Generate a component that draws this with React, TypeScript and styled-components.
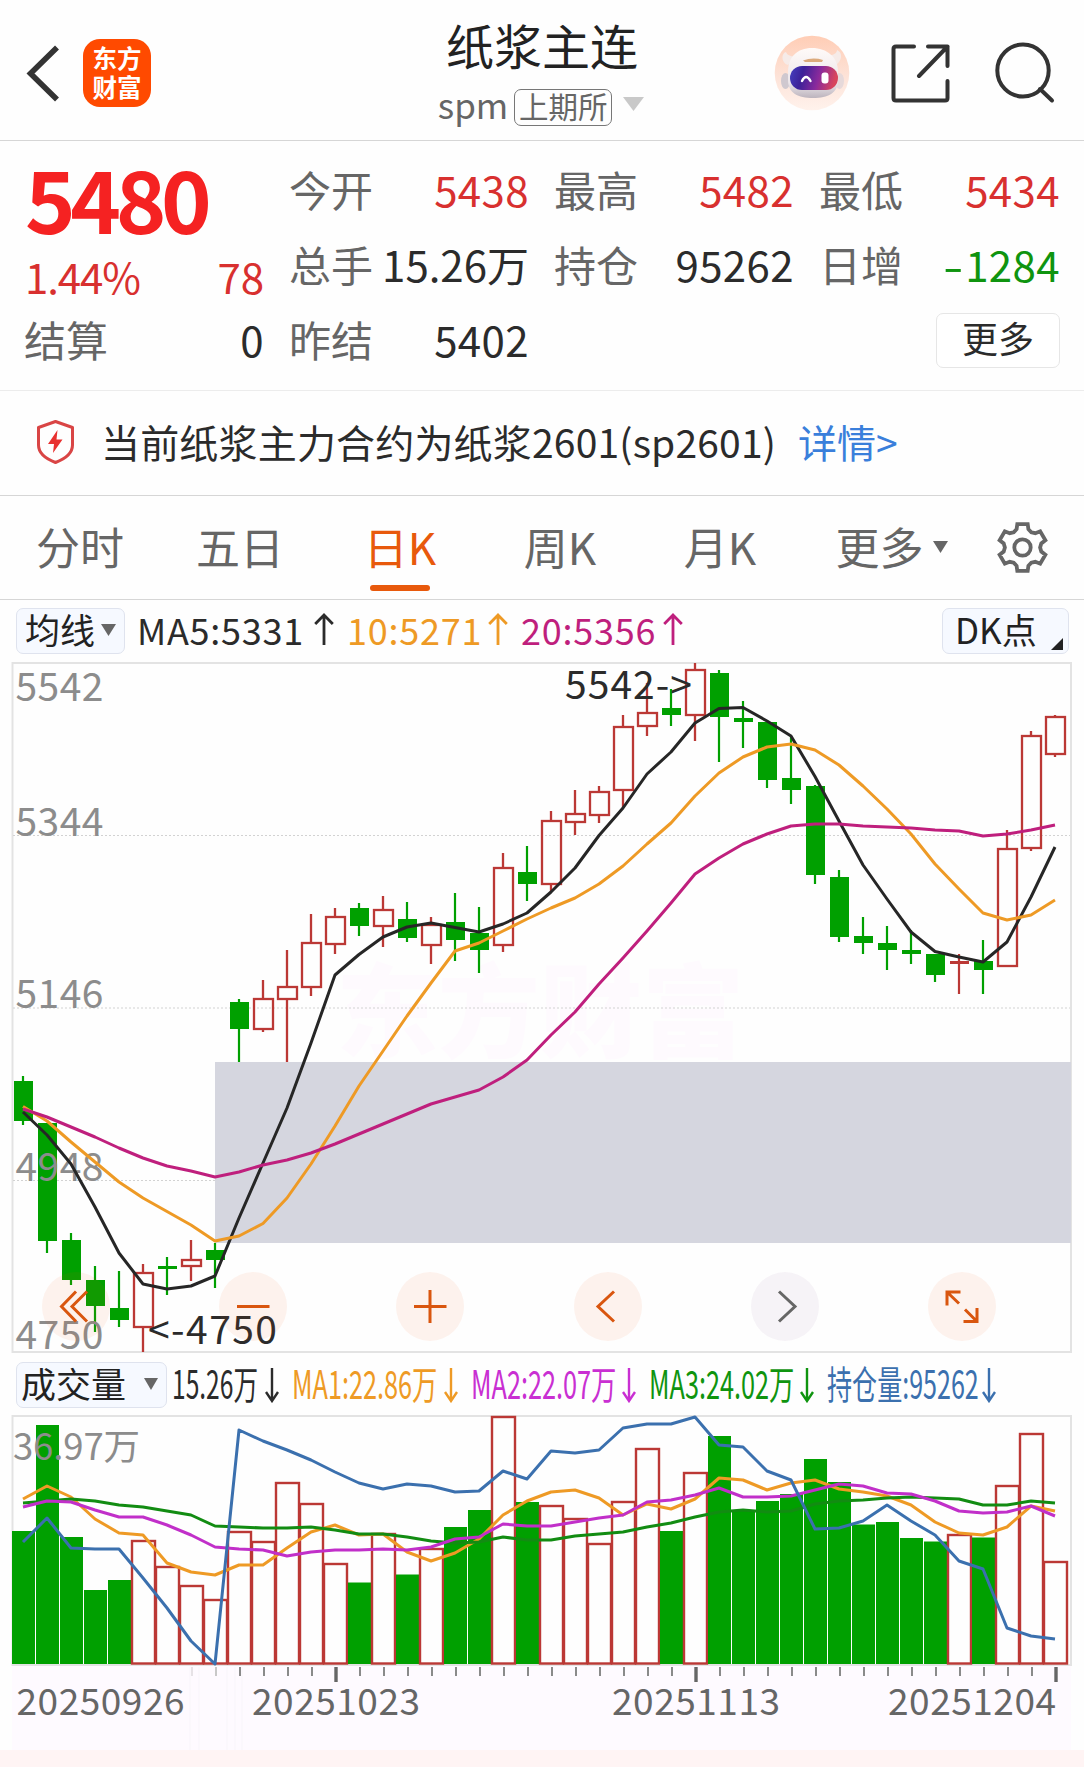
import React from 'react';
import styled, { createGlobalStyle } from 'styled-components';

const Global = createGlobalStyle`
  * { box-sizing: border-box; }
  body {
    margin: 0;
    background: #fefefe;
    color: #2b2b2b;
    font-family: "Noto Sans CJK SC", "Noto Sans", sans-serif;
  }
`;

const FONT = '"Noto Sans CJK SC", "Noto Sans", sans-serif';
const RED = '#d8302f';
const GREEN = '#0f940f';
const INK = '#2b2b2b';
const GREY = '#666';
const ORANGE = '#e8590c';

const Page = styled.main`
  width: 1084px;
  height: 1767px;
  display: flex;
  flex-direction: column;
  overflow: hidden;
  white-space: nowrap;
`;

/* ---------- header ---------- */

const Header = styled.header`
  height: 141px;
  flex: none;
  border-bottom: 1px solid #d6d6d6;
  display: grid;
  grid-template-columns: 1fr auto 1fr;
`;

const HeaderLeft = styled.div`
  display: flex;
  align-items: center;
  height: 68px;
  margin-top: 39px;
  padding-left: 24px;
  gap: 22px;
`;

const Logo = styled.div`
  width: 68px;
  height: 68px;
  border-radius: 17px;
  background: #ff4a00;
  color: #fff;
  font-size: 24.5px;
  font-weight: 700;
  line-height: 29px;
  text-align: center;
  padding-top: 4px;
`;

const TitleBlock = styled.div`
  display: flex;
  flex-direction: column;
  align-items: center;
  padding-top: 14px;
`;

const Title = styled.h1`
  margin: 0;
  font-size: 48px;
  font-weight: 400;
  line-height: 60px;
  height: 70px;
  color: #222;
`;

const SubTitle = styled.div`
  display: flex;
  align-items: center;
  font-size: 35px;
  line-height: 40px;
  height: 46px;
  color: ${GREY};
  padding-bottom: 6px;
  margin-right: 2px;
`;

const Exchange = styled.span`
  margin: 6px 11px 0 6px;
  width: 98px;
  height: 37px;
  border: 1.5px solid #777;
  border-radius: 7px;
  font-size: 29.5px;
  line-height: 31px;
  text-align: center;
`;

const HeaderRight = styled.div`
  display: flex;
  justify-content: flex-end;
  align-items: center;
  height: 76px;
  margin-top: 35px;
  padding-right: 28px;
  gap: 40px;
`;

const ShareSlot = styled.span`
  display: flex;
  margin-right: 4px;
`;

/* ---------- quote ---------- */

const Quote = styled.section`
  height: 250px;
  flex: none;
  border-bottom: 1px solid #ececec;
  padding: 10px 24px 0 25px;
  display: grid;
  grid-template-columns: 239px 239px 239px 240px;
  column-gap: 26px;
  font-size: 42px;
`;

const QuoteColumn = styled.div`
  display: flex;
  flex-direction: column;
`;

const Price = styled.div`
  height: 93px;
  line-height: 91px;
  font-size: 86px;
  font-weight: 700;
  letter-spacing: -5.4px;
  color: #f52222;
`;

const Row = styled.div<{ $h: number; $color?: string }>`
  display: flex;
  justify-content: space-between;
  height: ${p => p.$h}px;
  line-height: ${p => p.$h}px;
  color: ${p => p.$color || INK};
`;

const Percent = styled.span`
  letter-spacing: -1.1px;
`;

const Name = styled.span`
  color: ${GREY};
  margin-left: -1px;
`;

const Value = styled.span<{ $color?: string }>`
  color: ${p => p.$color || INK};
  letter-spacing: 0.4px;
`;

const Minus = styled.span`
  display: inline-block;
  width: 22px;
  transform: scaleX(1.4);
  transform-origin: left center;
`;

const MoreButton = styled.button`
  align-self: flex-end;
  margin-top: 12px;
  width: 124px;
  height: 55px;
  border: 1.5px solid #e6e6e6;
  border-radius: 7px;
  background: #fff;
  font: 400 36px/45px ${FONT};
  color: ${INK};
  padding: 0 0 7px;
`;

/* ---------- notice ---------- */

const Notice = styled.section`
  height: 105px;
  flex: none;
  border-bottom: 1px solid #d6d6d6;
  display: flex;
  align-items: center;
  padding: 0 0 3px 35px;
  font-size: 39px;
  line-height: 99px;
`;

const NoticeText = styled.span`
  margin-left: 25px;
  width: 697px;
  letter-spacing: 0.18px;
`;

const Link = styled.a`
  color: #3a7fdb;
`;

/* ---------- tabs ---------- */

const Tabs = styled.nav`
  height: 104px;
  flex: none;
  border-bottom: 1px solid #d6d6d6;
  display: flex;
`;

const Tab = styled.div<{ $active?: boolean; $w?: number }>`
  width: ${p => p.$w || 160}px;
  display: flex;
  flex-direction: column;
  align-items: center;
  font-size: 44px;
  line-height: 89px;
  height: 103px;
  padding-top: 6px;
  color: ${p => (p.$active ? ORANGE : GREY)};
`;

const Underline = styled.i`
  width: 60px;
  height: 6px;
  border-radius: 3px;
  margin-top: -6px;
  background: ${ORANGE};
`;

const TabLine = styled.span`
  display: flex;
  align-items: center;
  gap: 9px;
`;

const GearSlot = styled.div`
  display: flex;
  align-items: center;
  padding: 0 0 1px 13px;
`;

/* ---------- indicator rows ---------- */

const IndicatorBar = styled.div<{ $h: number }>`
  height: ${p => p.$h}px;
  flex: none;
  display: flex;
  align-items: flex-start;
  padding: 8px 15px 0 16px;
`;

const Picker = styled.button<{ $w: number; $gap?: number }>`
  flex: none;
  width: ${p => p.$w}px;
  height: 46px;
  border: 1.5px solid #dfe3ee;
  border-radius: 7px;
  background: #f6f9ff;
  padding: 0 8px 5px ${p => (p.$w > 130 ? 4 : 8)}px;
  margin-right: ${p => p.$gap || 0}px;
  display: flex;
  align-items: center;
  justify-content: space-between;
  font: 400 35px/38px ${FONT};
  color: #222;
  svg { margin-top: 3px; }
`;

const DkButton = styled(Picker)`
  margin-left: auto;
  padding: 0 5px 3px 12px;
  align-items: flex-end;
  line-height: 43px;
`;

const Average = styled.span<{ $color: string; $w: number }>`
  color: ${p => p.$color};
  width: ${p => p.$w}px;
  display: flex;
  align-items: center;
  justify-content: space-between;
  margin-right: 13px;
  font-size: 36px;
  letter-spacing: 0.75px;
  line-height: 38px;
  height: 43px;
  padding-bottom: 1px;
`;

const VolumeItem = styled.span<{ $color: string; $w: number }>`
  color: ${p => p.$color};
  width: ${p => p.$w}px;
  display: flex;
  align-items: center;
  justify-content: space-between;
  margin-right: 13px;
  height: 45px;
`;

const Condensed = styled.span<{ $scale?: number }>`
  width: 0;
  font-size: 39px;
  line-height: 43px;
  margin-top: -5px;
  transform: scaleX(${p => p.$scale || 0.648});
  transform-origin: left center;
`;

const ChartBox = styled.div<{ $h: number }>`
  position: relative;
  height: ${p => p.$h}px;
  flex: none;
  svg { display: block; overflow: visible; }
`;

const ControlStrip = styled.div`
  position: absolute;
  left: 42px;
  top: 610px;
  display: flex;
  gap: 109.2px;
`;

const RoundButton = styled.button<{ $muted?: boolean }>`
  width: 68px;
  height: 69px;
  border: 0;
  padding: 0;
  border-radius: 50%;
  background: ${p => (p.$muted ? 'rgba(90, 30, 120, .05)' : 'rgba(245, 85, 20, .072)')};
  color: ${p => (p.$muted ? '#666' : '#d9560f')};
`;

const Footer = styled.div`
  flex: 1;
  background: #fff4f4;
`;

/* ---------- chart data: vertical pixel positions on the page ---------- */

const X = (i: number) => 23 + 24 * i;

type Candle = [up: number, high: number, top: number, bottom: number, low: number];
const CANDLES: Candle[] = [
  [0, 1076, 1081, 1121, 1125], [0, 1123, 1123, 1241, 1253], [0, 1233, 1240, 1280, 1285],
  [0, 1266, 1280, 1306, 1332], [0, 1271, 1308, 1320, 1327], [1, 1264, 1272, 1328, 1352],
  [0, 1257, 1266, 1269, 1295], [1, 1240, 1259, 1267, 1281], [0, 1243, 1250, 1260, 1288],
  [0, 999, 1002, 1029, 1062], [1, 980, 998, 1030, 1032], [1, 950, 986, 1000, 1062],
  [1, 914, 942, 988, 996], [1, 908, 916, 945, 954], [0, 903, 908, 926, 936],
  [1, 896, 909, 927, 947], [0, 902, 919, 938, 942], [1, 917, 924, 946, 964],
  [0, 893, 922, 940, 961], [0, 907, 933, 950, 973], [1, 853, 867, 946, 952],
  [0, 846, 872, 884, 901], [1, 811, 820, 885, 892], [1, 790, 813, 823, 835],
  [1, 786, 791, 816, 823], [1, 715, 726, 791, 807], [1, 683, 712, 727, 736],
  [0, 689, 708, 715, 726], [1, 663, 669, 716, 741], [0, 670, 673, 717, 762],
  [0, 701, 718, 722, 748], [0, 722, 722, 780, 788], [0, 737, 778, 790, 804],
  [0, 785, 786, 875, 884], [0, 870, 877, 937, 942], [0, 917, 936, 943, 954],
  [0, 926, 943, 950, 970], [0, 930, 950, 954, 964], [0, 954, 954, 975, 982],
  [1, 954, 961, 964, 994], [0, 940, 961, 970, 994], [1, 830, 848, 967, 967],
  [1, 731, 735, 849, 851], [1, 715, 716, 755, 757],
];

const MA5 = [1112, 1135, 1164, 1207, 1253, 1284, 1289, 1286, 1276, 1218, 1163, 1108, 1043, 975, 954.5, 937, 927, 923, 927.5, 932, 924, 913, 892, 868, 835.5, 808, 774, 752, 723, 708.5, 707.5, 721, 736, 776.5, 821, 865, 899, 932, 951.5, 957, 962, 942, 897, 847];
const MA10 = [1106.5, 1121, 1142, 1162, 1182, 1198, 1211.5, 1225, 1241, 1236, 1223.5, 1198, 1164, 1126, 1086, 1051, 1016, 983, 951, 943, 931, 919, 908, 898, 884, 866, 844, 823, 796, 773, 757, 747, 744, 750, 765, 786, 809, 834, 864, 889, 913, 920, 915, 900];
const MA20 = [1109, 1117, 1127, 1137, 1148, 1158, 1166, 1171, 1177, 1172, 1165, 1160, 1153, 1144, 1134, 1124, 1114, 1104, 1097, 1090, 1077, 1060, 1035, 1012, 984, 958, 931, 903, 874, 858, 844, 834, 826, 824, 824, 826, 827, 828, 830, 831, 836, 834, 830, 825];

type Bar = [up: number, top: number];
const VOLUMES: Bar[] = [
  [0, 1531], [0, 1425], [0, 1537], [0, 1590], [0, 1580], [1, 1541], [1, 1567], [1, 1586], [1, 1600],
  [1, 1532], [1, 1542], [1, 1483], [1, 1504], [1, 1564], [0, 1582.5], [1, 1534], [0, 1574.5], [1, 1549],
  [0, 1527], [0, 1510], [1, 1417], [0, 1502], [1, 1506], [1, 1519], [1, 1544], [1, 1502], [1, 1449],
  [0, 1531], [1, 1473], [0, 1436], [0, 1511], [0, 1501], [0, 1494], [0, 1459], [0, 1482], [0, 1524.5],
  [0, 1522], [0, 1538], [0, 1541.5], [1, 1535], [0, 1537.5], [1, 1486], [1, 1434], [1, 1562],
];
const VMA1 = [1499, 1486, 1497, 1519, 1533, 1535, 1563, 1572, 1575, 1565, 1565, 1548, 1532, 1525, 1535, 1534, 1552, 1561, 1553, 1539, 1515, 1501, 1492, 1490, 1498, 1515, 1504, 1509, 1499, 1478, 1480, 1490, 1483, 1480, 1489, 1492, 1496, 1505, 1522, 1533, 1535, 1527, 1506, 1511];
const VMA2 = [1507, 1501, 1502, 1510, 1517, 1517, 1525, 1535, 1547, 1549, 1550, 1556, 1552, 1550, 1550, 1549, 1550, 1547, 1539, 1537, 1524, 1526, 1526, 1522, 1518, 1515, 1502, 1500, 1495, 1488, 1497, 1497, 1496, 1490, 1484, 1486, 1493, 1494, 1501, 1511, 1513, 1512, 1506, 1516];
const VMA3 = [1503, 1501, 1499, 1501, 1505, 1507, 1511, 1515, 1526, 1527, 1528, 1528, 1527, 1530, 1534, 1534, 1537, 1541, 1543, 1542, 1537, 1540, 1540, 1536, 1534, 1532, 1527, 1523, 1517, 1512, 1510, 1512, 1511, 1504, 1501, 1500, 1498, 1497, 1498, 1499, 1505, 1505, 1501, 1503];
const INTEREST = [1542, 1518, 1548, 1549, 1549, 1578, 1608, 1641, 1664, 1430, 1441, 1450, 1460, 1472, 1483, 1489, 1484, 1486, 1492, 1491, 1471, 1479, 1451, 1453, 1450, 1428, 1424, 1424, 1417, 1445, 1447, 1471, 1480, 1529, 1528, 1521, 1505, 1521, 1535, 1561, 1569, 1628, 1636, 1639];

const Line = ({ data, color }: { data: number[]; color: string }) => (
  <polyline
    points={data.map((y, i) => `${X(i)},${y}`).join(' ')}
    fill="none"
    stroke={color}
    strokeWidth={3}
    strokeLinejoin="round"
  />
);

const Caret = ({ w, h, color }: { w: number; h: number; color: string }) => (
  <svg width={w} height={h} viewBox={`0 0 ${w} ${h}`}>
    <path d={`M0 0H${w}L${w / 2} ${h}Z`} fill={color} />
  </svg>
);

const UpArrow = () => (
  <svg width="20" height="34" viewBox="0 0 20 34" fill="none" stroke="currentColor" strokeWidth="2.8">
    <path d="M10 33V3M1.2 12L10 3L18.8 12" />
  </svg>
);

const DownArrow = () => (
  <svg width="14" height="36" viewBox="0 0 14 36" fill="none" stroke="currentColor" strokeWidth="2.4">
    <path d="M7 1V34M1 25L7 34L13 25" />
  </svg>
);

const Robot = () => (
  <svg width="76" height="76" viewBox="0 0 76 76">
    <defs>
      <linearGradient id="halo" x1="0" y1="0" x2="0" y2="1">
        <stop offset="0" stopColor="#ffcdb5" />
        <stop offset=".55" stopColor="#fde3d8" />
        <stop offset="1" stopColor="#fff2ec" />
      </linearGradient>
      <linearGradient id="visor" x1="0" y1="0" x2="1" y2=".15">
        <stop offset="0" stopColor="#4540c0" />
        <stop offset=".3" stopColor="#3d2299" />
        <stop offset=".65" stopColor="#8a2a9c" />
        <stop offset="1" stopColor="#d8455c" />
      </linearGradient>
      <linearGradient id="shell" x1="0" y1="0" x2="0" y2="1">
        <stop offset="0" stopColor="#fffaf8" />
        <stop offset=".7" stopColor="#ece6ea" />
        <stop offset="1" stopColor="#bcb4bd" />
      </linearGradient>
    </defs>
    <circle cx="38" cy="38" r="37.3" fill="url(#halo)" />
    <path d="M12 17C7 18 7 28 14 30L21 22C16 21 13 20 12 17ZM63 15C70 18 67 28 61 30L54 21C60 20 63 18 63 15Z" fill="#f6ebe8" />
    <ellipse cx="11.500" cy="46" rx="4.500" ry="8" fill="#cfc8cf" />
    <ellipse cx="65.500" cy="46" rx="4.500" ry="8" fill="#e6d9da" />
    <path d="M14 37C14 22 23 13 38 13S64 22 64 37V45C64 58 54 63 39 63S14 58 14 45Z" fill="url(#shell)" />
    <path d="M29 25.500Q39 22 49 25L48 27H31Z" fill="#dcaa7c" />
    <rect x="16" y="31" width="48" height="24" rx="12" fill="url(#visor)" />
    <path d="M28 46Q32 38 36.500 46" fill="none" stroke="#fff" strokeWidth="2.4" strokeLinecap="round" />
    <rect x="47.500" y="37.500" width="7" height="11" rx="3" fill="#fff" />
  </svg>
);

const gearPath = () => {
  const pts: string[] = [];
  const shape: [number, number][] = [[-12.500, 24], [12.500, 24], [18, 19.2], [30, 17.6], [42, 19.2]];
  for (let k = 0; k < 6; k++) {
    shape.forEach(([deg, r]) => {
      const a = ((deg + k * 60 - 90) * Math.PI) / 180;
      pts.push(`${(26.5 + r * Math.cos(a)).toFixed(1)} ${(26.5 + r * Math.sin(a)).toFixed(1)}`);
    });
  }
  return `M${pts.join('L')}Z`;
};

const Gear = () => (
  <svg width="53" height="53" viewBox="0 0 53 53" fill="none" stroke={GREY} strokeWidth="3.800">
    <path d={gearPath()} />
    <circle cx="26.500" cy="26.500" r="8.200" />
  </svg>
);

const ControlIcon = ({ d }: { d: string }) => (
  <svg width="68" height="69" viewBox="-34 -34.500 68 69" fill="none" stroke="currentColor" strokeWidth="3">
    <path d={d} />
  </svg>
);

const CONTROLS = [
  'M0 -15L-14.500 0L0 15M11 -15L-4 0L11 15',
  'M-16 0H16.500',
  'M-16 0H16.500M0 -16.500V16.500',
  'M6 -15L-10 0L6 15',
  'M-6 -15L10 0L-6 15',
  'M-1.500 -14.500H-15V-1M-15 -14.500L-3 -3M1.500 15H15V1.500M15 15L3 3',
];

const PriceChart = () => (
  <svg width="1084" height="692" viewBox="0 662 1084 692" fontFamily={FONT}>
    <text x="336" y="1050" fontSize="102" fontWeight="900" fill="#fefafe">东方财富</text>
    <rect x="12.500" y="663" width="1058.500" height="689" fill="none" stroke="#e3e3e3" strokeWidth="2" />
    {[835.5, 1008, 1180.5].map(y => (
      <path key={y} d={`M13 ${y}H1070`} stroke="#d2d2d2" strokeWidth="1" strokeDasharray="2 2" />
    ))}
    <rect x="215" y="1062" width="856" height="181" fill="#d5d6df" />
    {CANDLES.map(([up, high, top, bottom, low], i) => {
      const x = X(i);
      if (!up) {
        return (
          <g key={i} fill="#00a000">
            <rect x={x - 1.1} y={high} width="2.2" height={low - high} />
            <rect x={x - 9} y={top} width="19" height={bottom - top} />
          </g>
        );
      }
      if (bottom - top < 4) {
        return (
          <g key={i} fill="#bb3835">
            <rect x={x - 1.1} y={high} width="2.2" height={low - high} />
            <rect x={x - 9} y={top} width="19" height="3" />
          </g>
        );
      }
      return (
        <g key={i} stroke="#bb3835" strokeWidth="2.3" fill="none">
          <path d={`M${x} ${high}V${top}M${x} ${bottom}V${low}`} />
          <rect x={x - 9} y={top + 1} width="19" height={bottom - top - 2} />
        </g>
      );
    })}
    <g fontSize="39" fill="#8c8c8c">
      <text x="15.500" y="701" textLength="88">5542</text>
      <text x="15.500" y="836" textLength="88">5344</text>
      <text x="15.500" y="1008" textLength="88">5146</text>
      <text x="15.500" y="1181" textLength="88">4948</text>
      <text x="15.500" y="1348.500" textLength="88">4750</text>
    </g>
    <Line data={MA5} color="#262626" />
    <Line data={MA10} color="#ee9a25" />
    <Line data={MA20} color="#bf1f7d" />
    <g fontSize="39" fill={INK}>
      <text x="565" y="699" textLength="127">5542-&gt;</text>
      <text x="148" y="1343.500" textLength="129">&lt;-4750</text>
    </g>
  </svg>
);

const VolumeChart = () => (
  <svg width="1084" height="335" viewBox="0 1415 1084 335" fontFamily={FONT}>
    <rect x="12" y="1665" width="1059" height="85" fill="#fefaff" />
    <rect x="12.500" y="1416" width="1058.500" height="249" fill="#fefefe" stroke="#e3e3e3" strokeWidth="2" />
    {VOLUMES.map(([up, top], i) =>
      up ? (
        <rect key={i} x={X(i) - 11} y={top} width="23" height={1663.5 - top} fill="#fefefe" stroke="#bb3835" strokeWidth="2.4" />
      ) : (
        <rect key={i} x={X(i) - 11} y={top} width="23" height={1664 - top} fill="#00a000" />
      )
    )}
    <text x="13" y="1459.500" fontSize="36.500" fill="#8c8c8c" textLength="127">36.97万</text>
    <Line data={VMA1} color="#ee9a25" />
    <Line data={VMA3} color="#128c12" />
    <Line data={VMA2} color="#c12fc9" />
    <Line data={INTEREST} color="#3b70ae" />
    {VOLUMES.map((_, i) => {
      if (i < 7) return null;
      const major = i === 13 || i === 28 || i === 43;
      const color = major ? '#666' : i < 9 ? (i < 8 ? '#e6e2e6' : '#c8c8c8') : '#8a8a8a';
      return (
        <path key={i} d={`M${X(i) + 1} 1667V${major ? 1682 : 1676}`} stroke={color} strokeWidth={major ? 3.4 : 2} />
      );
    })}
    <path d="M190 1667V1750M199 1667V1750M227 1667V1750M235 1667V1750M242 1667V1750" stroke="#f8f5fa" strokeWidth="1" />
    <g fontSize="37" fill={GREY}>
      <text x="16.500" y="1715" textLength="168">20250926</text>
      <text x="252" y="1715" textLength="168">20251023</text>
      <text x="612" y="1715" textLength="168">20251113</text>
      <text x="888" y="1715" textLength="168">20251204</text>
    </g>
  </svg>
);

export default function App() {
  return (
    <Page>
      <Global />
      <Header>
        <HeaderLeft>
          <svg width="37" height="60" viewBox="0 0 37 60" fill="none" stroke="#333" strokeWidth="5.600">
            <path d="M33 4.500L6.500 30.500L33 56.500" />
          </svg>
          <Logo>
            东方
            <br />
            财富
          </Logo>
        </HeaderLeft>
        <TitleBlock>
          <Title>纸浆主连</Title>
          <SubTitle>
            spm
            <Exchange>上期所</Exchange>
            <Caret w={21} h={14} color="#c9c9c9" />
          </SubTitle>
        </TitleBlock>
        <HeaderRight>
          <Robot />
          <ShareSlot>
            <svg width="60" height="60" viewBox="0 0 60 60" fill="none" stroke="#333" strokeWidth="4" strokeLinecap="round" strokeLinejoin="round">
              <path d="M24 3.500H6Q3.500 3.500 3.500 6V55Q3.500 57.500 6 57.500H55Q57.500 57.500 57.500 55V38M38 3.500H57.500V23M57.500 3.500L29 33" />
            </svg>
          </ShareSlot>
          <svg width="62" height="62" viewBox="0 0 62 62" fill="none" stroke="#333" strokeWidth="4" strokeLinecap="round">
            <ellipse cx="29" cy="28.500" rx="25.700" ry="26" />
            <path d="M46 47L58 58.500" />
          </svg>
        </HeaderRight>
      </Header>

      <Quote>
        <QuoteColumn>
          <Price>5480</Price>
          <Row $h={63} $color={RED}>
            <Percent>1.44%</Percent>
            <span>78</span>
          </Row>
          <Row $h={63}>
            <Name>结算</Name>
            <Value>0</Value>
          </Row>
        </QuoteColumn>
        <QuoteColumn>
          <Row $h={75}><Name>今开</Name><Value $color={RED}>5438</Value></Row>
          <Row $h={75}><Name>总手</Name><Value style={{ letterSpacing: 0 }}>15.26万</Value></Row>
          <Row $h={75}><Name>昨结</Name><Value>5402</Value></Row>
        </QuoteColumn>
        <QuoteColumn>
          <Row $h={75}><Name>最高</Name><Value $color={RED}>5482</Value></Row>
          <Row $h={75}><Name>持仓</Name><Value>95262</Value></Row>
        </QuoteColumn>
        <QuoteColumn>
          <Row $h={75}><Name>最低</Name><Value $color={RED}>5434</Value></Row>
          <Row $h={75}><Name>日增</Name><Value $color={GREEN}><Minus>-</Minus>1284</Value></Row>
          <MoreButton>更多</MoreButton>
        </QuoteColumn>
      </Quote>

      <Notice>
        <svg width="41" height="46" viewBox="0 0 41 46">
          <path d="M20.500 2.500L37.500 8.500V26C37.500 34 31 39.500 20.500 43.500C10 39.500 3.500 34 3.500 26V8.500Z" fill="none" stroke="#d94545" strokeWidth="3" strokeLinejoin="round" />
          <path d="M22.500 11L13 25H19L18 34L27.500 20.500H21.500Z" fill="#e8302f" />
        </svg>
        <NoticeText>当前纸浆主力合约为纸浆2601(sp2601)</NoticeText>
        <Link>详情&gt;</Link>
      </Notice>

      <Tabs>
        <Tab>分时</Tab>
        <Tab>五日</Tab>
        <Tab $active>
          日K
          <Underline />
        </Tab>
        <Tab>周K</Tab>
        <Tab>月K</Tab>
        <Tab $w={183}>
          <TabLine>
            更多
            <Caret w={15} h={12} color="#666" />
          </TabLine>
        </Tab>
        <GearSlot>
          <Gear />
        </GearSlot>
      </Tabs>

      <IndicatorBar $h={62}>
        <Picker $w={109} $gap={12}>
          均线
          <Caret w={15} h={12} color="#666" />
        </Picker>
        <Average $color={INK} $w={197}>MA5:5331<UpArrow /></Average>
        <Average $color="#ee9a25" $w={161}>10:5271<UpArrow /></Average>
        <Average $color="#bf1f7d" $w={162}>20:5356<UpArrow /></Average>
        <DkButton $w={127}>
          DK点
          <svg width="12" height="12" viewBox="0 0 12 12"><path d="M12 0V12H0Z" fill="#222" /></svg>
        </DkButton>
      </IndicatorBar>

      <ChartBox $h={692}>
        <PriceChart />
        <ControlStrip>
          {CONTROLS.map((d, i) => (
            <RoundButton key={d} $muted={i === 4}>
              <ControlIcon d={d} />
            </RoundButton>
          ))}
        </ControlStrip>
      </ChartBox>

      <IndicatorBar $h={61}>
        <Picker $w={151} $gap={5}>
          成交量
          <Caret w={14} h={12} color="#666" />
        </Picker>
        <VolumeItem $color={INK} $w={107}><Condensed $scale={0.63}>15.26万</Condensed><DownArrow /></VolumeItem>
        <VolumeItem $color="#ee9a25" $w={166}><Condensed>MA1:22.86万</Condensed><DownArrow /></VolumeItem>
        <VolumeItem $color="#c92fd2" $w={165}><Condensed>MA2:22.07万</Condensed><DownArrow /></VolumeItem>
        <VolumeItem $color={GREEN} $w={165}><Condensed>MA3:24.02万</Condensed><DownArrow /></VolumeItem>
        <VolumeItem $color="#3b70ae" $w={169}><Condensed $scale={0.643}>持仓量:95262</Condensed><DownArrow /></VolumeItem>
      </IndicatorBar>

      <ChartBox $h={335}>
        <VolumeChart />
      </ChartBox>
      <Footer />
    </Page>
  );
}
